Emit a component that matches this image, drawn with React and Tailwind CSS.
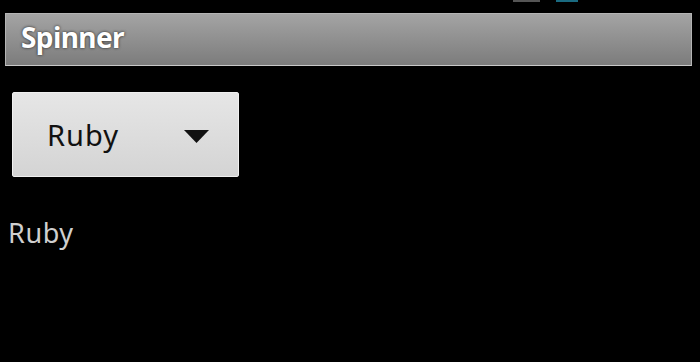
import React from "react";

export default function App() {
  return (
    <div className="w-[700px] h-[362px] bg-black overflow-hidden relative" style={{ fontFamily: "'Noto Sans', 'Open Sans', sans-serif" }}>
      <div className="absolute left-[513px] top-0 w-[27px] h-[2px] bg-[#555]" />
      <div className="absolute left-[556px] top-0 w-[22px] h-[2px] bg-[#1a6a80]" />
      <div className="pt-[13px] pl-[5px]">
        <div className="w-[687px] h-[53px] border border-[#b4b4b4] border-b-[#c8c8c8] bg-gradient-to-b from-[#a4a4a4] to-[#7c7c7c] flex items-center pl-[15px] pb-[5px]">
          <span className="text-white font-bold text-[28px] leading-none tracking-[-0.6px] [text-shadow:0_0_3px_rgba(0,0,0,0.8)]">Spinner</span>
        </div>
      </div>
      <div className="pt-[26px] pl-[12px]">
        <div className="w-[227px] h-[85px] rounded-[2px] bg-gradient-to-b from-[#e6e6e6] to-[#d4d4d4] border border-[#f0f0f0] flex items-center pl-[34px] pr-[29px] justify-between">
          <span className="text-[#111] text-[29px] leading-none tracking-[1px]">Ruby</span>
          <svg className="mt-[4px]" width="25" height="13" viewBox="0 0 25 13"><polygon points="0,0 25,0 12.5,13" fill="#111" /></svg>
        </div>
      </div>
      <div className="pt-[42px] pl-[8px] text-[#cfcfcf] text-[27px] leading-none tracking-[0.6px]">Ruby</div>
    </div>
  );
}
